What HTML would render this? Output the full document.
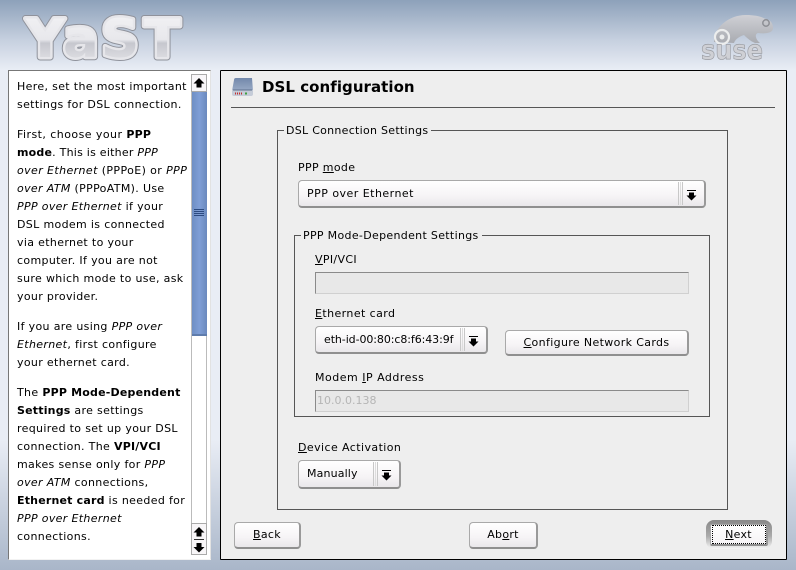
<!DOCTYPE html>
<html><head><meta charset="utf-8"><style>
html,body{margin:0;padding:0}
body{width:796px;height:570px;position:relative;overflow:hidden;background:linear-gradient(#8da1ba 0,#c6d0df 40px,#e9edf5 70px,#e9edf5 440px,#a9b6c9 570px);font-family:"DejaVu Sans",sans-serif;font-size:11px;color:#000}
.a{position:absolute}
.t{position:absolute;white-space:nowrap;line-height:18px;height:18px;letter-spacing:.34px;margin-top:1px}
.t b{letter-spacing:.2px}
u{text-underline-offset:1px}
.btn{position:absolute;box-sizing:border-box;border:1px solid #a9a9a9;border-bottom:2px solid #8f8f8f;border-right:2px solid #999;border-radius:4px;background:linear-gradient(#fff,#f6f4f6 60%,#e9e7ea);text-align:center;white-space:nowrap;letter-spacing:.3px}
.inp{position:absolute;box-sizing:border-box;background:#e8e8e8;border:1px solid #d0d0d0;border-top:1px solid #8a8a8a;border-left:1px solid #8a8a8a}
.grp{position:absolute;box-sizing:border-box;border:1px solid #555}
.leg{position:absolute;background:#eee;padding:0 3px 0 2px;line-height:14px;white-space:nowrap;letter-spacing:.28px;margin-top:1px}
.grip{position:absolute;width:3px;top:1px;bottom:1px;border-left:1px solid #c8c8c8;border-right:1px solid #c8c8c8}
.grip:after{content:"";position:absolute;left:1px;top:0;bottom:0;width:1px;background:#ddd}
svg{position:absolute;display:block}
</style></head><body>

<svg style="left:0;top:0" width="240" height="70" viewBox="0 0 240 70">
<defs><linearGradient id="g" x1="0" y1="0" x2="0" y2="1"><stop offset="0" stop-color="#f3f3f5"/><stop offset=".5" stop-color="#e8e8ec"/><stop offset=".56" stop-color="#c6c7ce"/><stop offset="1" stop-color="#ececef"/></linearGradient></defs>
<text x="26 63 101 144" y="57" font-family="DejaVu Sans" font-weight="bold" font-size="53" fill="#8f929b" stroke="#8f929b" stroke-width="7" stroke-linejoin="round">YaST</text>
<text x="26 63 101 144" y="57" font-family="DejaVu Sans" font-weight="bold" font-size="53" fill="#e6e6ea" stroke="#e6e6ea" stroke-width="5" stroke-linejoin="round">YaST</text>
<text x="26 63 101 144" y="57" font-family="DejaVu Sans" font-weight="bold" font-size="53" fill="url(#g)">YaST</text>
</svg>

<svg style="left:700px;top:12px" width="80" height="52" viewBox="0 0 80 52">
<defs><linearGradient id="c" x1="0" y1="0" x2="0" y2="1"><stop offset="0" stop-color="#cfd0d5"/><stop offset="1" stop-color="#a9abb1"/></linearGradient></defs>
<path d="M14 30C14 16 28 3 46 3C56 3 62 5 66 7C71 8 73 12 73 16C73 21 66 22 58 21C54 22 56 28 60 31H55C50 29 46 25 44 23C38 25 35 28 34 31Z" fill="url(#c)"/>
<circle cx="22" cy="25" r="7" fill="none" stroke="#eceded" stroke-width="2.2"/>
<circle cx="22" cy="25" r="2.5" fill="#eceded"/>
<circle cx="66" cy="11" r="3.2" fill="none" stroke="#8d8f95" stroke-width="1.5"/>
<text x="1" y="47" font-family="DejaVu Sans" font-weight="bold" font-size="27" textLength="62" lengthAdjust="spacingAndGlyphs" fill="#cfd0d5" stroke="#9a9ca2" stroke-width=".7">suse</text>
</svg>

<!-- left help panel -->
<div class="a" style="left:8px;top:70px;width:203px;height:490px;box-sizing:border-box;background:#fff;border:1px solid #777;border-right:1px solid #e2e2e2;border-bottom:1px solid #f2f2f2"></div>
<div class="t" style="left:17px;top:77px">Here, set the most important</div>
<div class="t" style="left:17px;top:95px">settings for DSL connection.</div>
<div class="t" style="left:17px;top:125px;letter-spacing:.45px">First, choose your <b>PPP</b></div>
<div class="t" style="left:17px;top:143px;letter-spacing:.24px"><b>mode</b>. This is either <i>PPP</i></div>
<div class="t" style="left:17px;top:161px;letter-spacing:.4px"><i>over Ethernet</i> (PPPoE) or <i>PPP</i></div>
<div class="t" style="left:17px;top:179px"><i>over ATM</i> (PPPoATM). Use</div>
<div class="t" style="left:17px;top:197px"><i>PPP over Ethernet</i> if your</div>
<div class="t" style="left:17px;top:215px">DSL modem is connected</div>
<div class="t" style="left:17px;top:233px">via ethernet to your</div>
<div class="t" style="left:17px;top:251px">computer. If you are not</div>
<div class="t" style="left:17px;top:269px">sure which mode to use, ask</div>
<div class="t" style="left:17px;top:287px">your provider.</div>
<div class="t" style="left:17px;top:317px">If you are using <i>PPP over</i></div>
<div class="t" style="left:17px;top:335px"><i>Ethernet</i>, first configure</div>
<div class="t" style="left:17px;top:353px">your ethernet card.</div>
<div class="t" style="left:17px;top:383px">The <b>PPP Mode-Dependent</b></div>
<div class="t" style="left:17px;top:401px"><b>Settings</b> are settings</div>
<div class="t" style="left:17px;top:419px">required to set up your DSL</div>
<div class="t" style="left:17px;top:437px">connection. The <b>VPI/VCI</b></div>
<div class="t" style="left:17px;top:455px">makes sense only for <i>PPP</i></div>
<div class="t" style="left:17px;top:473px"><i>over ATM</i> connections,</div>
<div class="t" style="left:17px;top:491px"><b>Ethernet card</b> is needed for</div>
<div class="t" style="left:17px;top:509px"><i>PPP over Ethernet</i></div>
<div class="t" style="left:17px;top:527px">connections.</div>

<!-- scrollbar -->
<div class="a" style="left:191px;top:74px;width:16px;height:480px;background:#fff;border-left:1px solid #bbb;border-right:1px solid #bbb;box-sizing:border-box"></div>
<div class="a" style="left:192px;top:92px;width:15px;height:244px;background:linear-gradient(90deg,#6f8fc4,#7f9ed6 50%,#6a89bd);border-bottom:2px solid #5f7cac;box-sizing:border-box"></div>
<div class="a" style="left:194px;top:209px;width:10px;height:1px;background:#2c4a80;box-shadow:0 2px 0 #2c4a80,0 4px 0 #2c4a80,0 6px 0 #2c4a80"></div>
<div class="a" style="left:191px;top:74px;width:16px;height:18px;box-sizing:border-box;background:#f8f6f8;border:1px solid #aaa"></div>
<div class="a" style="left:191px;top:523px;width:16px;height:32px;box-sizing:border-box;background:#f8f6f8;border:1px solid #aaa"></div>
<div class="a" style="left:194px;top:539px;width:10px;height:1px;background:#333"></div>
<svg style="left:193px;top:78px" width="12" height="10"><path d="M6 0L11.500 5.500H8.500V9.500H3.500V5.500H.5Z" fill="#000"/></svg>
<svg style="left:193px;top:527px" width="12" height="10"><path d="M6 0L11.500 5.500H8.500V9.500H3.500V5.500H.5Z" fill="#000"/></svg>
<svg style="left:193px;top:543px" width="12" height="10"><path d="M6 9.500L11.500 4H8.500V0H3.500V4H.5Z" fill="#000"/></svg>

<!-- right panel -->
<div class="a" style="left:220px;top:70px;width:567px;height:490px;box-sizing:border-box;background:#eee;border:1px solid #000;border-radius:1px"></div>
<svg style="left:231px;top:77px" width="23" height="20" viewBox="0 0 23 20">
<defs><linearGradient id="d" x1="0" y1="0" x2="0" y2="1"><stop offset="0" stop-color="#7288ab"/><stop offset="1" stop-color="#9aabc6"/></linearGradient></defs>
<path d="M3 3Q3 1 5 1H21L22 14H1Z" fill="url(#d)"/><path d="M1 13H22V17Q22 19 20 19H3Q1 19 1 17Z" fill="#c5ccd8"/><path d="M2 13H21" stroke="#5d6f8d"/>
<path d="M4 16.500h8" stroke="#c23030" stroke-width="2" stroke-dasharray="1 1"/><path d="M14 16.500h2" stroke="#40a040" stroke-width="2"/>
</svg>
<div class="t" style="left:262px;top:77px;font-size:15px;font-weight:bold;letter-spacing:.05px">DSL configuration</div>
<div class="a" style="left:231px;top:107px;width:544px;height:1px;background:#555"></div>

<!-- group 1 -->
<div class="grp" style="left:277px;top:130px;width:451px;height:380px"></div>
<div class="leg" style="left:284px;top:123px">DSL Connection Settings</div>
<div class="t" style="left:298px;top:158px">PPP <u>m</u>ode</div>
<div class="btn" style="left:298px;top:180px;width:408px;height:28px;text-align:left;padding:0 0 0 8px;line-height:26px;letter-spacing:.48px">PPP over Ethernet
  <div class="grip" style="left:379px"></div>
  <svg style="left:387px;top:9px" width="11" height="12"><path d="M1 .5H10" stroke="#000"/><path d="M3 2.500H8V5.500H10.500L5.500 10.500L.5 5.500H3Z" fill="#000"/></svg>
</div>

<!-- group 2 -->
<div class="grp" style="left:294px;top:235px;width:416px;height:182px"></div>
<div class="leg" style="left:301px;top:228px;letter-spacing:.32px">PPP Mode-Dependent Settings</div>
<div class="t" style="left:315px;top:250px"><u>V</u>PI/VCI</div>
<div class="inp" style="left:315px;top:272px;width:374px;height:22px"></div>
<div class="t" style="left:315px;top:304px;letter-spacing:.42px"><u>E</u>thernet card</div>
<div class="btn" style="left:315px;top:326px;width:173px;height:28px;text-align:left;padding:0 0 0 8px;line-height:26px;letter-spacing:-.08px">eth-id-00:80:c8:f6:43:9f
  <div class="grip" style="left:144px"></div>
  <svg style="left:152px;top:9px" width="11" height="12"><path d="M1 .5H10" stroke="#000"/><path d="M3 2.500H8V5.500H10.500L5.500 10.500L.5 5.500H3Z" fill="#000"/></svg>
</div>
<div class="btn" style="left:505px;top:330px;width:184px;height:26px;line-height:24px;letter-spacing:.36px"><u>C</u>onfigure Network Cards</div>
<div class="t" style="left:315px;top:368px;letter-spacing:.5px">Modem <u>I</u>P Address</div>
<div class="inp" style="left:315px;top:390px;width:374px;height:22px;color:#b5b5b5;padding-left:1px;line-height:20px">10.0.0.138</div>

<div class="t" style="left:298px;top:438px;letter-spacing:.42px"><u>D</u>evice Activation</div>
<div class="btn" style="left:298px;top:460px;width:103px;height:29px;text-align:left;padding:0 0 0 8px;line-height:26px;letter-spacing:.14px">Manually
  <div class="grip" style="left:74px"></div>
  <svg style="left:82px;top:9px" width="11" height="12"><path d="M1 .5H10" stroke="#000"/><path d="M3 2.500H8V5.500H10.500L5.500 10.500L.5 5.500H3Z" fill="#000"/></svg>
</div>

<!-- buttons -->
<div class="btn" style="left:234px;top:522px;width:67px;height:27px;line-height:23px"><u>B</u>ack</div>
<div class="btn" style="left:469px;top:522px;width:69px;height:27px;line-height:23px">Ab<u>o</u>rt</div>
<div class="a" style="left:706px;top:520px;width:66px;height:29px;box-sizing:border-box;border-radius:8px;background:linear-gradient(#888,#aaa 55%,#f6f6f6)"></div>
<div class="btn" style="left:710px;top:524px;width:58px;height:22px;line-height:20px;border-radius:2px;background:linear-gradient(#fff,#f6f4f6)"><span style="position:absolute;left:1px;top:0;right:0;bottom:0;border:1px dotted #000"></span><u>N</u>ext</div>

</body></html>
